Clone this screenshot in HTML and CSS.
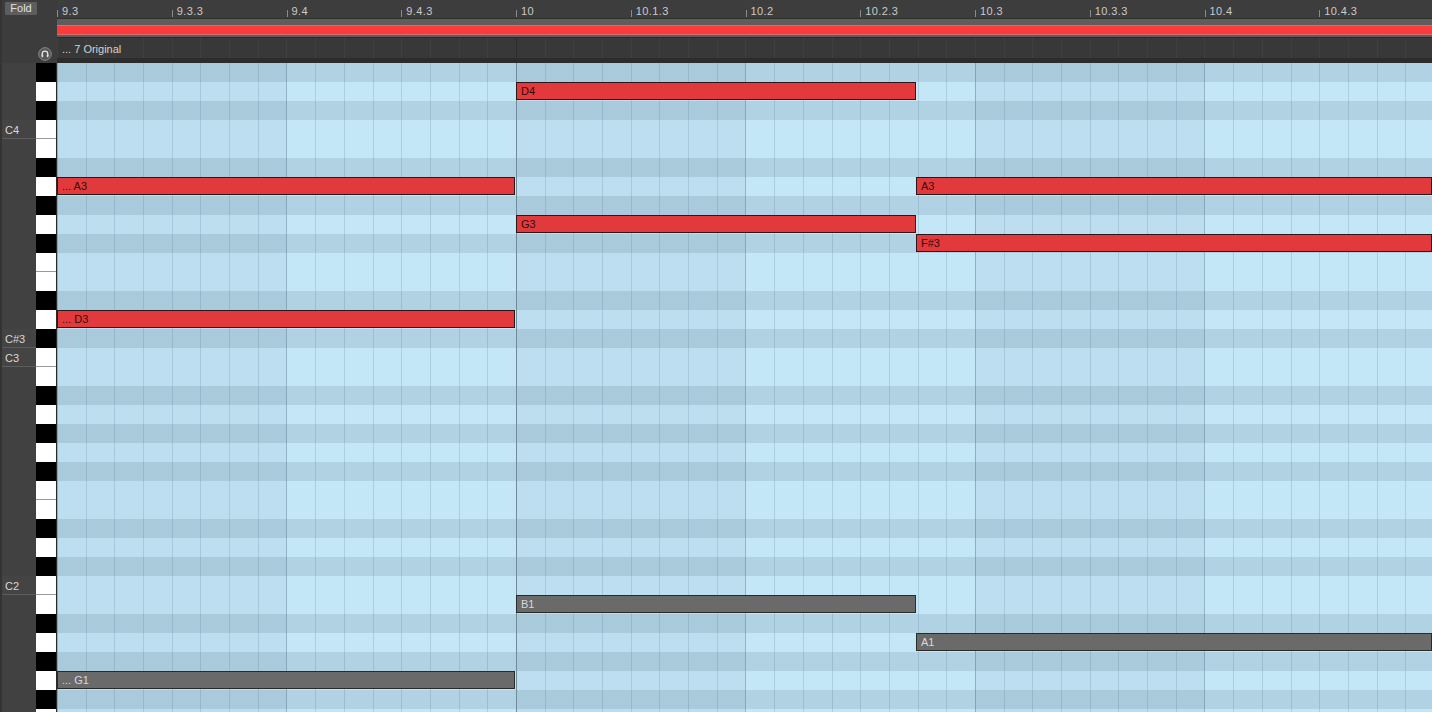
FILE: index.html
```html
<!DOCTYPE html>
<html>
<head>
<meta charset="utf-8">
<link rel="stylesheet" href="styles.css">
</head>
<body>
<div class="app">
  <div class="top">
    <div class="top-left">
      <div class="fold">Fold</div>
      <div class="preview">
        <svg width="14" height="14" viewBox="0 0 14 14">
          <circle cx="7" cy="7" r="6.3" fill="#555" stroke="#8c8c8c" stroke-width="1"/>
          <path d="M4.2 9 V7 A2.8 2.8 0 0 1 9.8 7 V9" fill="none" stroke="#e6e6e6" stroke-width="1.3"/>
          <rect x="3.6" y="7.6" width="1.6" height="2.6" fill="#e6e6e6"/>
          <rect x="8.8" y="7.6" width="1.6" height="2.6" fill="#e6e6e6"/>
        </svg>
      </div>
    </div>
    <div class="top-right">
      <div class="ruler">
        <span class="mark">9.3</span>
        <span class="mark">9.3.3</span>
        <span class="mark">9.4</span>
        <span class="mark">9.4.3</span>
        <span class="mark">10</span>
        <span class="mark">10.1.3</span>
        <span class="mark">10.2</span>
        <span class="mark">10.2.3</span>
        <span class="mark">10.3</span>
        <span class="mark">10.3.3</span>
        <span class="mark">10.4</span>
        <span class="mark">10.4.3</span>
      </div>
      <div class="loopband"><div class="loopbar"></div></div>
      <div class="clip-header">... 7 Original</div>
      <div class="header-gap"></div>
    </div>
  </div>
  <div class="body">
    <div class="labels">
      <div class="lrow"></div><div class="lrow"></div><div class="lrow"></div>
      <div class="lrow named">C4</div>
      <div class="lrow"></div><div class="lrow"></div><div class="lrow"></div><div class="lrow"></div><div class="lrow"></div><div class="lrow"></div>
      <div class="lrow"></div><div class="lrow"></div><div class="lrow"></div><div class="lrow"></div>
      <div class="lrow named">C#3</div>
      <div class="lrow named">C3</div>
      <div class="lrow"></div><div class="lrow"></div><div class="lrow"></div><div class="lrow"></div><div class="lrow"></div>
      <div class="lrow"></div><div class="lrow"></div><div class="lrow"></div><div class="lrow"></div><div class="lrow"></div><div class="lrow"></div>
      <div class="lrow named">C2</div>
      <div class="lrow"></div><div class="lrow"></div><div class="lrow"></div><div class="lrow"></div><div class="lrow"></div><div class="lrow"></div><div class="lrow"></div>
    </div>
    <div class="keys">
      <div class="key b"></div><div class="key w"></div><div class="key b"></div><div class="key w sep"></div>
      <div class="key w"></div><div class="key b"></div><div class="key w"></div><div class="key b"></div>
      <div class="key w"></div><div class="key b"></div><div class="key w sep"></div><div class="key w"></div>
      <div class="key b"></div><div class="key w"></div><div class="key b"></div><div class="key w sep"></div>
      <div class="key w"></div><div class="key b"></div><div class="key w"></div><div class="key b"></div>
      <div class="key w"></div><div class="key b"></div><div class="key w sep"></div><div class="key w"></div>
      <div class="key b"></div><div class="key w"></div><div class="key b"></div><div class="key w sep"></div>
      <div class="key w"></div><div class="key b"></div><div class="key w"></div><div class="key b"></div>
      <div class="key w"></div><div class="key b"></div><div class="key w sep"></div>
    </div>
    <div class="grid">
      <div class="note red" style="left:459px; top:19px; width:400px">D4</div>
      <div class="note red" style="left:0; top:114px; width:458px">... A3</div>
      <div class="note red" style="left:859px; top:114px; width:516px">A3</div>
      <div class="note red" style="left:459px; top:152px; width:400px">G3</div>
      <div class="note red" style="left:859px; top:171px; width:516px">F#3</div>
      <div class="note red" style="left:0; top:247px; width:458px">... D3</div>
      <div class="note grey" style="left:459px; top:532px; width:400px">B1</div>
      <div class="note grey" style="left:859px; top:570px; width:516px">A1</div>
      <div class="note grey" style="left:0; top:608px; width:458px">... G1</div>
    </div>
  </div>
</div>
</body>
</html>
```

FILE: styles.css
```css
* { box-sizing: border-box; }
html, body { margin: 0; padding: 0; background: #3f3f3f; }
body { font-family: "Liberation Sans", Arial, sans-serif; font-size: 11px; }

.app {
  width: 1432px;
  height: 712px;
  overflow: hidden;
  display: flex;
  flex-direction: column;
  background: #404040;
}

.top {
  display: flex;
  height: 63px;
  flex: none;
}

.top-left {
  width: 57px;
  flex: none;
  background: #3c3c3c;
  display: flex;
  flex-direction: column;
  border-left: 2px solid #343434;
}
.fold {
  margin: 2px 0 0 3px;
  width: 32px;
  height: 13px;
  background: #5d5d5d;
  color: #e0e0e0;
  font-size: 11px;
  line-height: 13px;
  text-align: center;
  border-radius: 1px;
}
.preview {
  margin: 32px 0 0 36px;
  width: 14px;
  height: 14px;
  display: flex;
}

.top-right {
  flex: 1;
  display: flex;
  flex-direction: column;
  min-width: 0;
}

.ruler {
  height: 18px;
  flex: none;
  display: flex;
  background-color: #3d3d3d;
  background-image: repeating-linear-gradient(90deg, #6e6e6e 0 1px, transparent 1px 28.6875px);
  background-size: 100% 3px;
  background-position: 0 15px;
  background-repeat: no-repeat;
}
.mark {
  width: 114.75px;
  flex: none;
  padding: 4px 0 0 5px;
  line-height: 14px;
  color: #cacaca;
  letter-spacing: 0.4px;
  background-image: linear-gradient(#8c8c8c, #8c8c8c);
  background-repeat: no-repeat;
  background-size: 1px 7px;
  background-position: 0 10px;
  background-color: #3d3d3d;
}

.loopband {
  height: 20px;
  flex: none;
  background: #5d5d5d;
  border-top: 1px solid #2f2f2f;
  border-bottom: 1px solid #2b2b2b;
  padding-top: 6px;
}
.loopbar {
  height: 10px;
  background: #fa3b3b;
  border-top: 1px solid #d96c6c;
  border-bottom: 1px solid #d96c6c;
}

.clip-header {
  height: 20px;
  flex: none;
  padding: 2px 0 0 5px;
  line-height: 18px;
  color: #d2d2d2;
  background-color: #383838;
  background-image:
    linear-gradient(90deg, transparent 459px, #2c2c2c 459px, #2c2c2c 460px, transparent 460px),
    repeating-linear-gradient(90deg, rgba(255,255,255,0.035) 0 1px, transparent 1px 28.6875px);
}
.header-gap {
  height: 5px;
  flex: none;
  background: #2c2c2c;
}

.body {
  flex: 1;
  display: flex;
  min-height: 0;
}

.labels {
  width: 36px;
  flex: none;
  display: flex;
  flex-direction: column;
  background: #414141;
  border-left: 2px solid #343434;
}
.lrow {
  height: 19px;
  flex: none;
}
.lrow.named {
  background: #444444;
  border-bottom: 1px solid #5c5c5c;
  color: #d8d8d8;
  padding: 1px 0 0 3px;
  line-height: 18px;
}

.keys {
  width: 21px;
  flex: none;
  display: flex;
  flex-direction: column;
  border-right: 1px solid #2a2a2a;
}
.key {
  height: 19px;
  flex: none;
}
.key.w { background: #ffffff; }
.key.b { background: #000000; }
.key.sep { border-bottom: 1px solid #9a9a9a; }

.grid {
  flex: 1;
  position: relative;
  overflow: hidden;
  background-color: #c4e7f8;
  background-image:
    linear-gradient(90deg, transparent 459px, #6f8a99 459px, #6f8a99 460px, transparent 460px),
    repeating-linear-gradient(90deg, rgba(60,100,120,0.24) 0 1px, transparent 1px 229.5px),
    repeating-linear-gradient(90deg, rgba(80,120,140,0.22) 0 1px, transparent 1px 28.6875px),
    repeating-linear-gradient(90deg, rgba(0,30,60,0.045) 0 229.5px, transparent 229.5px 459px),
    repeating-linear-gradient(180deg,
      rgba(0,25,50,0.1) 0 19px, transparent 19px 38px,
      rgba(0,25,50,0.1) 38px 57px, transparent 57px 95px,
      rgba(0,25,50,0.1) 95px 114px, transparent 114px 133px,
      rgba(0,25,50,0.1) 133px 152px, transparent 152px 171px,
      rgba(0,25,50,0.1) 171px 190px, transparent 190px 228px);
}

.note {
  position: absolute;
  height: 18px;
  border: 1px solid #2b1717;
  padding-left: 4px;
  line-height: 16px;
  font-size: 11px;
  white-space: nowrap;
  overflow: hidden;
}
.note.red {
  background: #e23a3c;
  color: #360a0a;
}
.note.grey {
  background: #6a6a6a;
  border-color: #2a2a2a;
  color: #d8d8d8;
}
```
